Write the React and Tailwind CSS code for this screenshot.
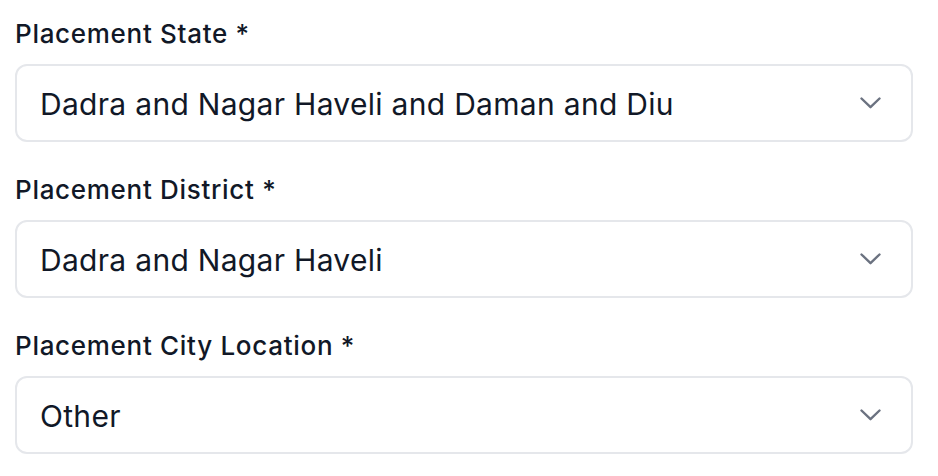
const fields = [
    { label: 'Placement State *', value: 'Dadra and Nagar Haveli and Daman and Diu' },
    { label: 'Placement District *', value: 'Dadra and Nagar Haveli' },
    { label: 'Placement City Location *', value: 'Other' },
];

const Chevron = () => (
    <svg width="21" height="12" viewBox="0 0 21 12" fill="none" className="shrink-0">
        <path d="M1.5 1.5 L10.5 10.2 L19.5 1.5" stroke="#6b7280" strokeWidth="2.4" strokeLinecap="round" strokeLinejoin="round" />
    </svg>
);

const App = () => {
    return (
        <div className="w-[938px] h-[476px] bg-white pl-[15px] pr-[25px] pt-[16px] font-['Inter',sans-serif] text-[#111827]">
            <div className="flex flex-col gap-[30px]">
                {fields.map((f) => (
                    <div key={f.label} className="flex flex-col">
                        <label className="text-[26px] leading-[36px] font-medium tracking-[0.7px] mb-[12px]">{f.label}</label>
                        <div className="h-[78px] border-2 border-[#e5e7eb] rounded-[12px] flex items-center justify-between pl-[23px] pr-[30px]">
                            <span className="text-[30px] leading-[36px] tracking-[0.3px] pt-[2px]">{f.value}</span>
                            <Chevron />
                        </div>
                    </div>
                ))}
            </div>
        </div>
    );
};

export default App;
